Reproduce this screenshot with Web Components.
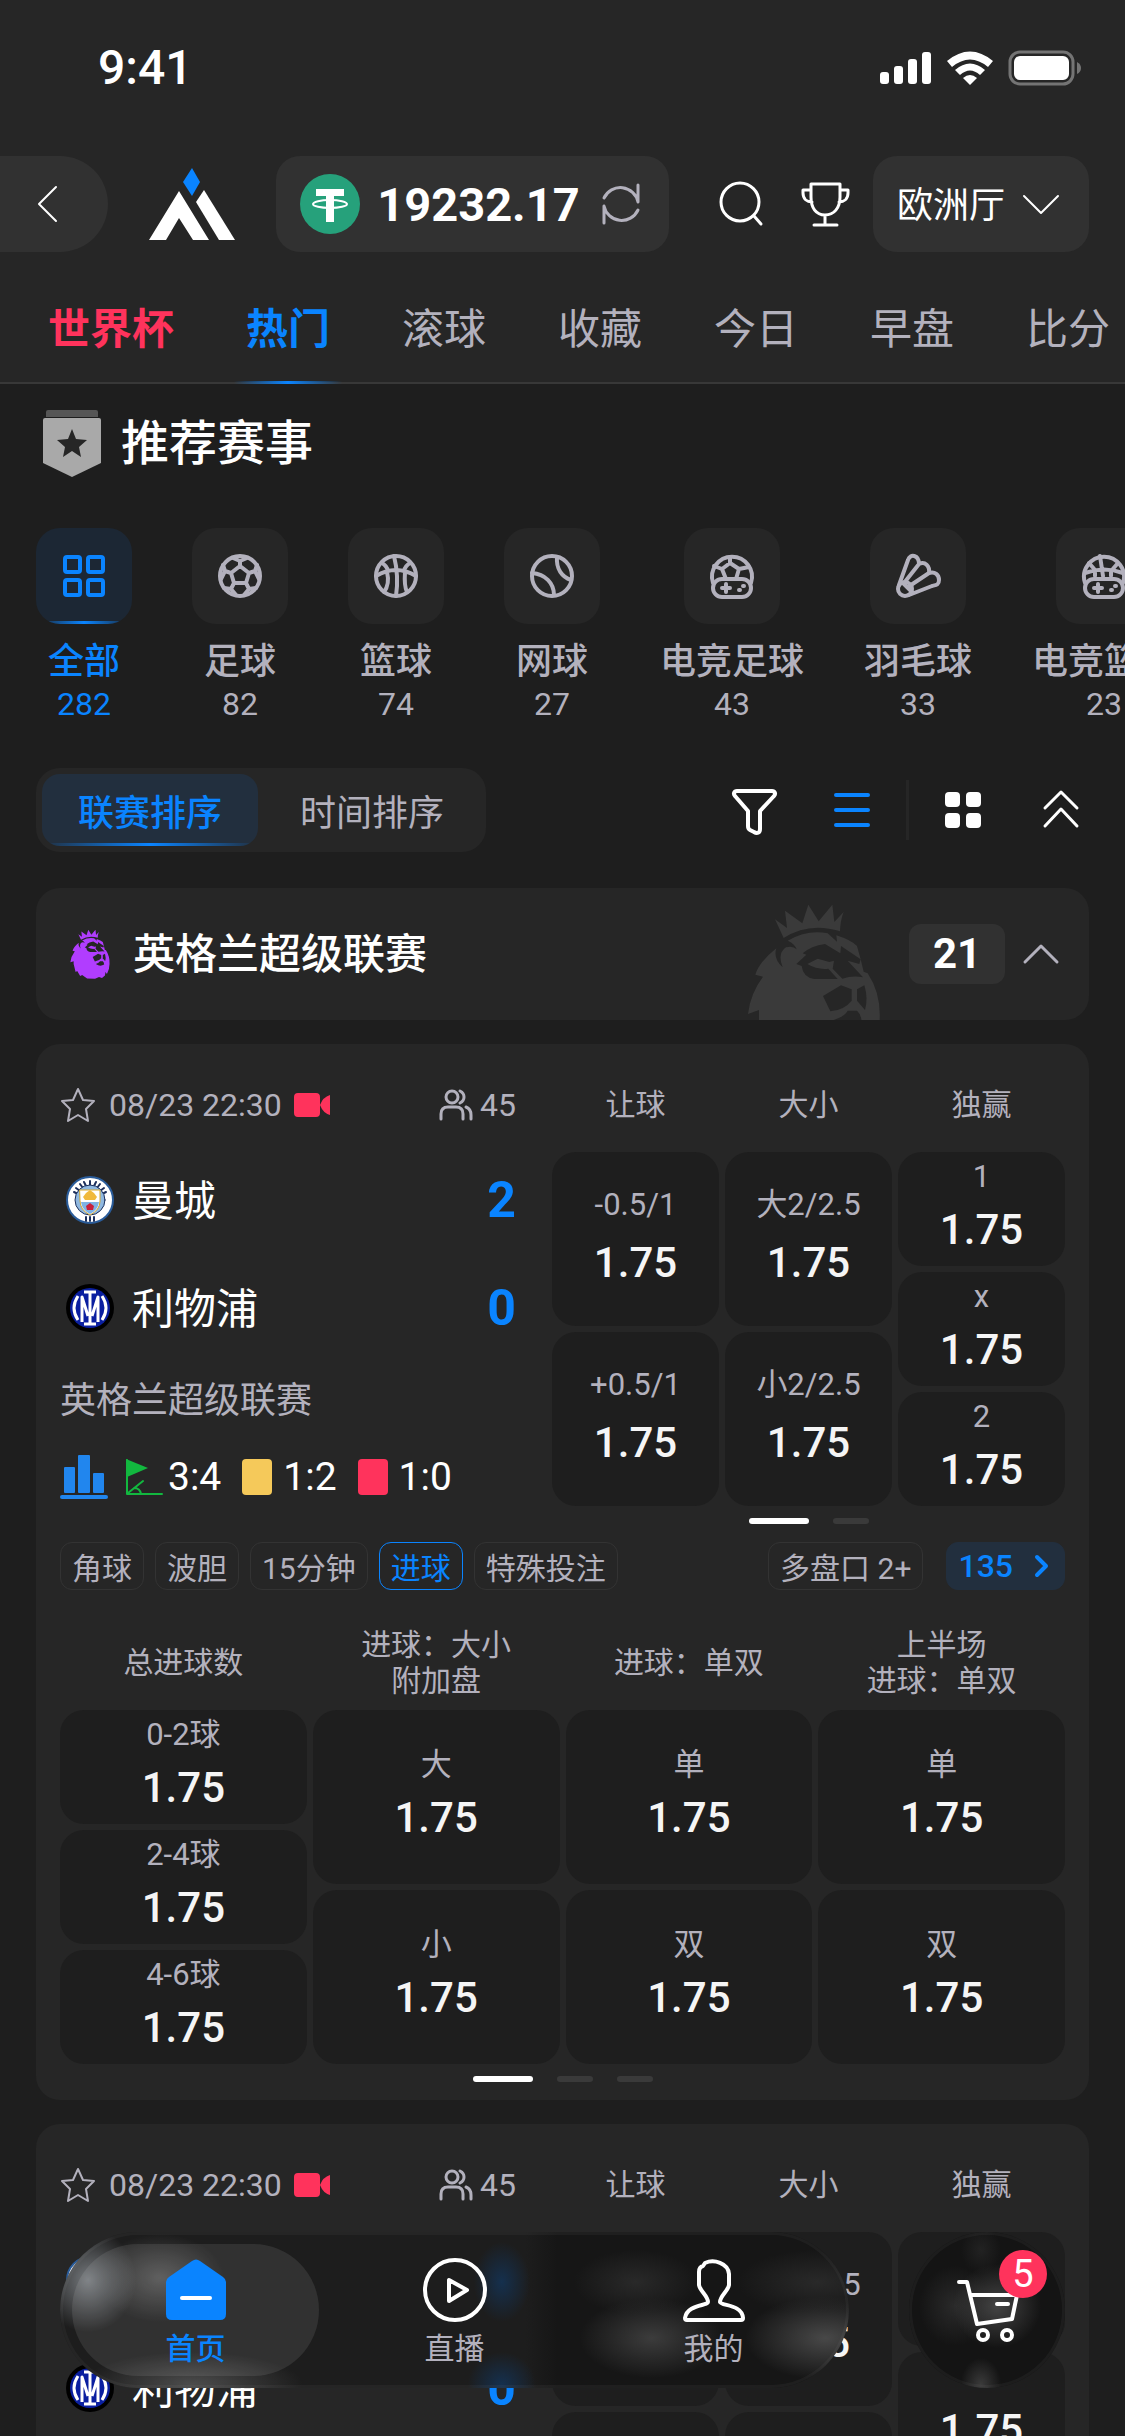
<!DOCTYPE html>
<html lang="zh-CN">
<head>
<meta charset="utf-8">
<meta name="viewport" content="width=device-width, initial-scale=1">
<title>推荐赛事</title>
<style>
    html, body {
        margin: 0;
        height: 100%;
    }
    body {
        background: #1e1e1e;
        color: #fff;
        font-family: Roboto, "Noto Sans CJK SC", sans-serif;
        --blue: #0a84ff;
        --red: #ff335c;
        --grey: #b3b1bd;
        --page: #1e1e1e;
        --card: #262626;
        --raised: #313131;
        --tint: #222f3e;
    }
</style>
</head>
<body>
<sports-app>
    <status-bar slot="header" time="9:41"></status-bar>
    <top-bar slot="header" balance="19232.17"></top-bar>
    <nav-tabs slot="header">
        <nav-tab kind="hot">世界杯</nav-tab>
        <nav-tab kind="active">热门</nav-tab>
        <nav-tab>滚球</nav-tab>
        <nav-tab>收藏</nav-tab>
        <nav-tab>今日</nav-tab>
        <nav-tab>早盘</nav-tab>
        <nav-tab>比分</nav-tab>
    </nav-tabs>

    <section-title>推荐赛事</section-title>
    <sport-list>
        <sport-item icon="all" count="282" active>全部</sport-item>
        <sport-item icon="soccer" count="82">足球</sport-item>
        <sport-item icon="basketball" count="74">篮球</sport-item>
        <sport-item icon="tennis" count="27">网球</sport-item>
        <sport-item icon="esoccer" count="43">电竞足球</sport-item>
        <sport-item icon="shuttle" count="33">羽毛球</sport-item>
        <sport-item icon="ebasketball" count="23">电竞篮球</sport-item>
    </sport-list>
    <sort-bar></sort-bar>
    <league-header count="21">英格兰超级联赛</league-header>
    <match-card></match-card>
    <match-card></match-card>

    <tab-bar slot="footer"></tab-bar>
</sports-app>

<script>
    // every icon is drawn with currentColor unless it has its own colours
    const LION = `
        <path d="M132 88L158 144Q235 95 327 124Q328 90 338 66L310 96L304 44L263 94L232 44L214 100L162 62L168 114Z"/>
        <path d="M170 152Q230 118 290 130L318 155L316 136Q360 150 378 168L389 208L398 245L410 250Q450 310 446 390Q446 440 420 490L405 470L400 505L370 530L340 520L300 538L220 535L170 500L150 510L120 460L104 470L84 390V360L51 372Q58 310 96 260L73 254Q85 215 136 175Q126 205 155 232Q138 190 165 172Q185 166 197 178Q190 160 170 152Z"/>
        <g fill="var(--card)">
            <path d="M226 194L215 190Q240 168 282 162L328 190L330 168L389 208L385 222L350 212L396 262Q365 256 334 266L305 236L309 212L295 216L260 206L229 222Q260 240 292 236L320 267H250Q216 262 212 228L196 222Z"/>
            <path d="M276 318L330 286L362 298V332Q340 360 298 364Z"/>
            <path d="M378 298L400 286Q412 325 402 360L378 332Z"/>
            <path d="M308 390Q340 380 350 362H378Q390 372 392 395Q350 420 308 390Z"/>
        </g>`;
    const PAD = '<rect x="5" y="27" width="38" height="18" rx="9"/><path d="M14 36h8M18 32v8"/><path d="M31 38h1M35 34h1"/>';

    const ICONS = {
        signal: ['0 0 52 34', '<g fill="currentColor"><rect y="21" width="9" height="12" rx="3"/><rect x="14" y="15" width="9" height="18" rx="3"/><rect x="28" y="8" width="9" height="25" rx="3"/><rect x="42" y="1" width="9" height="32" rx="3"/></g>'],
        wifi: ['0 0 46 34', '<g fill="currentColor"><path d="M0 10Q23-9 46 10L41 16Q23 1 5 16Z"/><path d="M8 19Q23 6 38 19L33 24Q23 15 13 24Z"/><path d="M16 27Q23 21 30 27L23 34Z"/></g>'],
        battery: ['0 0 74 36', '<rect x="2" y="2" width="63" height="32" rx="10" fill="none" stroke="#747474" stroke-width="3"/><rect x="6" y="6" width="55" height="24" rx="6" fill="currentColor"/><path d="M69 12q4 2 4 6t-4 6z" fill="#747474"/>'],
        back: ['0 0 48 48', '<path d="M32 7L15 24L32 41" stroke-width="2"/>'],
        logo: ['0 0 96 96', '<path d="M48 12L56 26L48 40L39 26Z" fill="#0a84ff"/><path d="M35 35L5 84H22L35 62L49 84H65Z" fill="currentColor"/><path d="M60 34L52 46L75 84H91Z" fill="currentColor"/>'],
        usdt: ['0 0 60 60', '<circle cx="30" cy="30" r="30" fill="#26a17b"/><path d="M16 15H44V22H34V48H26V22H16Z" fill="#fff"/><ellipse cx="30" cy="30" rx="17" ry="4" stroke="#fff" stroke-width="2"/>'],
        refresh: ['0 0 48 48', '<path d="M7 18A18 18 0 0 1 41 22V5M41 30A18 18 0 0 1 7 26V43" stroke-width="3"/>'],
        search: ['0 0 48 48', '<circle cx="23" cy="22" r="19" stroke-width="3"/><path d="M37 36L44 44" stroke-width="3"/>'],
        trophy: ['0 0 48 48', '<path d="M10 4H39V17C39 28 33 35 24 35S10 28 10 17ZM24 35V44M13 45H36M10 10H2V13C2 19 6 22 11 22M39 10H47V13C47 19 43 22 38 22" stroke-width="3"/>'],
        down: ['0 0 48 48', '<path d="M7 16L24 33L41 16" stroke-width="2"/>'],
        medal: ['0 0 60 68', '<path d="M4 2Q4 0 6 0H54Q56 0 56 2V7H4Z" fill="#565656"/><path d="M1 10Q1 8 3 8H57Q59 8 59 10V53L30 67L1 53Z" fill="#a9a9a9"/><path d="M30 19L34 29L45 30L37 37L39 47L30 41L21 47L23 37L15 30L26 29Z" fill="#262626"/>'],
        all: ['0 0 48 48', '<g stroke-width="4"><rect x="5" y="5" width="15" height="15" rx="2"/><rect x="28" y="5" width="15" height="15" rx="2"/><rect x="5" y="28" width="15" height="15" rx="2"/><rect x="28" y="28" width="15" height="15" rx="2"/></g>'],
        soccer: ['0 0 48 48', '<circle cx="24" cy="24" r="20"/><path d="M24 14L33 21L30 31H18L15 21ZM24 14V9M17 6L24 9L31 6M33 21L39 19M43 27L39 19L41 13M30 31L33 37M28 43L33 37L40 36M18 31L15 37M20 43L15 37L8 36M15 21L9 19M5 27L9 19L7 13"/>'],
        basketball: ['0 0 48 48', '<circle cx="24" cy="24" r="20"/><path d="M22 4Q27 24 24 44M4 24Q24 12 44 24M10 11Q15 14 16 19M38 11Q33 14 32 19M15 20Q18 32 12 40M33 20Q32 34 35 40"/>'],
        tennis: ['0 0 48 48', '<circle cx="24" cy="24" r="20"/><path d="M4 21C17 22 26 31 26 43M29 5C28 17 34 25 43 28"/>'],
        esoccer: ['0 0 48 48', '<path d="M5 31A20 20 0 1 1 43 31"/><path d="M18 27L14 17L22 11L31 17L28 27M22 11V5M14 17L6 14M31 17L41 15"/>' + PAD],
        ebasketball: ['0 0 48 48', '<path d="M5 31A20 20 0 1 1 43 31"/><path d="M5 21Q24 14 43 21M20 4L23 24M9 11L15 18M38 11L32 18M15 20V24M31 20V24"/>' + PAD],
        shuttle: ['0 0 48 48', '<circle cx="11" cy="37" r="7"/><path d="M5 33L14 8C16 1 25 3 25 12C31 9 36 14 35 21C41 19 45 23 45 28S42 33 38 34L15 43M10 31L25 12M14 35L35 21M9 31L19 41"/>'],
        filter: ['0 0 48 48', '<path d="M7 5H42C45 5 46 8 44 10L30 25V43C30 47 27 48 24 46L20 44Q18 43 18 40V25L5 10C3 8 4 5 7 5Z" stroke-width="4"/>'],
        list: ['0 0 48 48', '<g fill="currentColor"><rect x="6" y="7" width="36" height="4" rx="2"/><rect x="6" y="22" width="36" height="4" rx="2"/><rect x="6" y="37" width="36" height="4" rx="2"/></g>'],
        grid: ['0 0 48 48', '<g fill="currentColor"><rect x="6" y="6" width="15" height="15" rx="4"/><rect x="27" y="6" width="15" height="15" rx="4"/><rect x="6" y="27" width="15" height="15" rx="4"/><rect x="27" y="27" width="15" height="15" rx="4"/></g>'],
        collapse: ['0 0 48 48', '<path d="M8 22L24 6L40 22M8 40L24 23L40 40" stroke-width="3"/>'],
        up: ['0 0 48 48', '<path d="M8 32L24 16L40 32" stroke-width="3"/>'],
        lion: ['48 36 402 504', '<g fill="currentColor">' + LION + '</g>'],
        star: ['0 0 36 36', '<path d="M18 2L23 13L34 14L26 22L28 34L18 28L8 34L10 22L2 14L13 13Z" stroke-width="2"/>'],
        camera: ['0 0 36 24', '<path d="M4 0H22Q26 0 26 4V20Q26 24 22 24H4Q0 24 0 20V4Q0 0 4 0ZM36 2V22Q29 20 26 12Q29 4 36 2Z" fill="#ff335c"/>'],
        people: ['0 0 36 36', '<g stroke-width="3"><circle cx="14" cy="10" r="6"/><path d="M3 32V27Q3 20 10 20H18Q25 20 25 27V32M22 4Q26 6 26 10T22 16M28 20Q33 22 33 28V32"/></g>'],
        bars: ['0 0 48 44', '<g fill="#2186ee"><rect x="4" y="12" width="11" height="26" rx="1"/><rect x="18" y="0" width="12" height="38" rx="1"/><rect x="33" y="18" width="11" height="20" rx="1"/><rect y="40" width="48" height="4" rx="2"/></g>'],
        flag: ['0 0 36 36', '<path d="M0 0L22 9L1 18Z" fill="#12b83f"/><path d="M1 1V35H36M2 34L17 22M8 29Q14 29 15 35" stroke="#12b83f" stroke-width="2"/>'],
        more: ['0 0 24 24', '<path d="M8 3L17 12L8 21" stroke-width="4"/>'],
        home: ['0 0 64 64', '<path d="M28 3Q32 0 36 3L59 19Q62 21 62 24V56Q62 62 56 62H8Q2 62 2 56V24Q2 21 5 19Z" fill="#0a84ff"/><path d="M18 40H46" stroke="#fff" stroke-width="4"/>'],
        play: ['0 0 64 64', '<circle cx="32" cy="32" r="30" stroke-width="4"/><path d="M26 22V43L44 32Z" stroke-width="4"/>'],
        user: ['0 0 64 64', '<path d="M23 5C32 1 46 5 47 16V27C46 33 38 38 38 44C39 48 60 46 61 60Q61 62 59 62H5Q3 62 3 60C5 46 26 48 26 44C26 38 18 33 17 27V14Q17 9 21 8Z" stroke-width="4"/>'],
        cart: ['0 0 64 64', '<path d="M4 4H12L22 46L57 41L62 17H15M42 26H53" stroke-width="4"/><circle cx="28" cy="57" r="5" stroke-width="4"/><circle cx="52" cy="57" r="5" stroke-width="4"/>'],
        city: ['0 0 48 48', `
            <circle cx="24" cy="24" r="23" fill="#fff" stroke="#2a5c9a" stroke-width="2"/>
            <path d="M8 16l4 2M10 12l4 3M14 8l3 4M18 6l2 4M24 5v4M30 6l-2 4M34 8l-3 4M38 12l-4 3M40 16l-4 2M20 41v4M24 41v4M28 41v4" stroke="#1c2f5c" stroke-width="2"/>
            <circle cx="24" cy="24" r="15" fill="#8fb8e0" stroke="#1c2f5c" stroke-width="1"/>
            <path d="M14 14H34V25Q34 34 24 39Q14 34 14 25Z" fill="#fff" stroke="#d9a92f" stroke-width="1"/>
            <path d="M15 26H33Q32 34 24 38Q16 34 15 26Z" fill="#7fb2e5"/>
            <path d="M17 21L20 17L24 14L28 17L31 21L29 24H19Z" fill="#f0b93c"/>
            <path d="M24 27L28 30L27 34H21L20 30Z" fill="#c8203c"/>`],
        inter: ['0 0 48 48', `
            <circle cx="24" cy="24" r="24" fill="#000"/><circle cx="24" cy="24" r="20" fill="#0a1fa0"/>
            <g stroke="#fff" stroke-width="3" stroke-linecap="butt">
                <path d="M18 8H30M18 40H30M24 8V40M16 38V13L22 32M32 38V13L26 32"/>
                <path d="M12 12Q4 24 12 36M36 12Q44 24 36 36"/>
            </g>`]
    };

    // shared base: each element gives its own css() and html()
    class BaseElement extends HTMLElement {
        connectedCallback() {
            if (this.shadowRoot) return;
            this.attachShadow({ mode: 'open' });
            const tmpl = document.createElement('template');
            tmpl.innerHTML = `
                <style>
                * { box-sizing: border-box; }
                :host { display: block; box-sizing: border-box; }
                button { margin: 0; padding: 0; border: 0; background: none; color: inherit; font: inherit; cursor: pointer; }
                ${this.css()}
                </style>
                ${this.html()}`;
            this.shadowRoot.appendChild(tmpl.content.cloneNode(true));
        }
        css() { return ''; }
        html() { return '<slot></slot>'; }
        attr(name) { return this.getAttribute(name) || ''; }
    }

    customElements.define('ui-icon', class extends BaseElement {
        css() {
            return `
                :host { flex: none; width: 48px; height: 48px; }
                svg { display: block; width: 100%; height: 100%; overflow: visible; }
                :host([line]) svg { stroke: currentColor; stroke-width: 4px; }
                [stroke-width]:not([stroke]) { stroke: currentColor; }`;
        }
        html() {
            const [box, body] = ICONS[this.attr('name')];
            return `<svg viewBox="${box}" fill="none" stroke-linecap="round" stroke-linejoin="round" aria-hidden="true">${body}</svg>`;
        }
    });

    customElements.define('sports-app', class extends BaseElement {
        css() {
            return `
                :host { position: relative; display: flex; flex-direction: column; height: 100vh; overflow: hidden; }
                header { flex: none; background: linear-gradient(#383838, #383838) bottom / 100% 2px no-repeat var(--card); }
                main { flex: 1; min-height: 0; overflow-y: auto; overflow-x: hidden; scrollbar-width: none; padding: 0 36px; }
                footer { position: absolute; left: 60px; right: 60px; bottom: 48px; }`;
        }
        html() {
            return `
                <header><slot name="header"></slot></header>
                <main><slot></slot></main>
                <footer><slot name="footer"></slot></footer>`;
        }
    });

    customElements.define('status-bar', class extends BaseElement {
        css() {
            return `
                :host { display: flex; align-items: center; gap: 15px; padding: 44px 43px 64px 98px; }
                time { flex: 1; font-size: 48px; line-height: 48px; font-weight: 500; }
                .signal { width: 52px; height: 34px; }
                .wifi { width: 46px; height: 34px; }
                .battery { width: 74px; height: 36px; }`;
        }
        html() {
            return `
                <time>${this.attr('time')}</time>
                <ui-icon class="signal" name="signal"></ui-icon>
                <ui-icon class="wifi" name="wifi"></ui-icon>
                <ui-icon class="battery" name="battery"></ui-icon>`;
        }
    });

    customElements.define('top-bar', class extends BaseElement {
        css() {
            return `
                :host { display: flex; align-items: center; gap: 36px; height: 96px; padding-right: 36px; }
                .back { display: flex; align-items: center; padding-left: 24px; width: 108px; height: 96px; background: var(--raised); border-radius: 0 48px 48px 0; }
                .logo { width: 96px; height: 96px; }
                .balance { flex: 1; display: flex; align-items: center; height: 96px; padding: 0 24px; border-radius: 24px; background: var(--raised); }
                .balance span { flex: 1; text-align: center; font-size: 47px; font-weight: 700; }
                .coin { width: 60px; height: 60px; }
                .refresh { color: var(--grey); }
                .tools { display: flex; gap: 36px; padding-left: 12px; }
                .hall { position: relative; width: 216px; margin-left: -12px; color: #fff; }
                .hall ui-icon { position: absolute; right: 24px; top: 24px; pointer-events: none; }
                select { appearance: none; width: 100%; height: 96px; padding: 3px 24px 0; border: 0; border-radius: 24px; background: var(--raised); color: #fff; font: inherit; font-size: 36px; }`;
        }
        html() {
            return `
                <button class="back" aria-label="返回"><ui-icon name="back"></ui-icon></button>
                <ui-icon class="logo" name="logo"></ui-icon>
                <div class="balance">
                    <ui-icon class="coin" name="usdt"></ui-icon>
                    <span>${this.attr('balance')}</span>
                    <button class="refresh" aria-label="刷新"><ui-icon name="refresh"></ui-icon></button>
                </div>
                <div class="tools">
                    <button aria-label="搜索"><ui-icon name="search"></ui-icon></button>
                    <button aria-label="奖杯"><ui-icon name="trophy"></ui-icon></button>
                </div>
                <div class="hall">
                    <select aria-label="厅"><option>欧洲厅</option></select>
                    <ui-icon name="down"></ui-icon>
                </div>`;
        }
    });

    customElements.define('nav-tabs', class extends BaseElement {
        css() { return 'nav { display: flex; gap: 72px; padding-left: 48px; overflow: hidden; }'; }
        html() { return '<nav><slot></slot></nav>'; }
    });

    customElements.define('nav-tab', class extends BaseElement {
        css() {
            return `
                :host { flex: none; position: relative; color: var(--grey); font-size: 42px; }
                :host([kind]) { color: var(--blue); font-weight: 700; }
                :host([kind="hot"]) { color: var(--red); }
                :host([kind="active"])::after { content: ""; position: absolute; left: -12px; right: -12px; bottom: 0; height: 3px; background: linear-gradient(90deg, transparent, var(--blue), transparent); }
                a { display: block; padding: 54px 0 30px; line-height: 48px; color: inherit; text-decoration: none; }`;
        }
        html() { return '<a href="#"><slot></slot></a>'; }
    });

    customElements.define('section-title', class extends BaseElement {
        css() {
            return `
                :host { display: flex; align-items: center; gap: 19px; height: 120px; padding-left: 6px; }
                ui-icon { width: 60px; height: 68px; }
                h1 { margin: 0; font-size: 48px; font-weight: 500; line-height: 60px; }`;
        }
        html() { return '<ui-icon name="medal"></ui-icon><h1><slot></slot></h1>'; }
    });

    customElements.define('sport-list', class extends BaseElement {
        css() { return ':host { display: flex; gap: 60px; margin: 24px -36px 46px 0; overflow: hidden; }'; }
    });

    customElements.define('sport-item', class extends BaseElement {
        css() {
            return `
                :host { flex: none; color: var(--grey); }
                :host([active]) { color: var(--blue); }
                button { display: flex; flex-direction: column; align-items: center; }
                .box { display: grid; place-items: center; width: 96px; height: 96px; margin-bottom: 14px; border-radius: 24px; background: var(--card); }
                :host([active]) .box { background: linear-gradient(90deg, transparent, var(--blue), transparent) bottom / 100% 3px no-repeat #1c2734; }
                .name { font-size: 36px; line-height: 48px; font-weight: 500; white-space: nowrap; }
                .count { font-size: 32px; line-height: 36px; }`;
        }
        html() {
            return `
                <button>
                    <span class="box"><ui-icon line name="${this.attr('icon')}"></ui-icon></span>
                    <span class="name"><slot></slot></span>
                    <span class="count">${this.attr('count')}</span>
                </button>`;
        }
    });

    customElements.define('sort-bar', class extends BaseElement {
        css() {
            return `
                :host { display: flex; justify-content: space-between; align-items: center; margin-bottom: 36px; }
                .sort { display: flex; gap: 6px; padding: 6px; border-radius: 24px; background: var(--card); }
                .sort button { width: 216px; height: 72px; border-radius: 18px; color: var(--grey); font-size: 36px; }
                .sort .on { color: var(--blue); font-weight: 500; background: linear-gradient(90deg, transparent, var(--blue), transparent) bottom / 100% 3px no-repeat var(--tint); }
                .tools { display: flex; align-items: center; gap: 50px; padding-right: 4px; }
                .view { display: flex; align-items: center; gap: 30px; }
                .view i { width: 3px; height: 60px; background: var(--card); }
                .blue { color: var(--blue); }`;
        }
        html() {
            return `
                <div class="sort">
                    <button class="on">联赛排序</button>
                    <button>时间排序</button>
                </div>
                <div class="tools">
                    <button aria-label="筛选"><ui-icon name="filter"></ui-icon></button>
                    <div class="view">
                        <button class="blue" aria-label="列表"><ui-icon name="list"></ui-icon></button>
                        <i></i>
                        <button aria-label="宫格"><ui-icon name="grid"></ui-icon></button>
                    </div>
                    <button aria-label="收起"><ui-icon name="collapse"></ui-icon></button>
                </div>`;
        }
    });

    customElements.define('league-header', class extends BaseElement {
        css() {
            return `
                :host { position: relative; display: flex; align-items: center; height: 132px; padding: 0 24px 0 34px; border-radius: 24px; background: var(--card); overflow: hidden; }
                .lion { width: 40px; height: 50px; color: #b13dff; }
                h2 { flex: 1; margin: 0 0 0 23px; padding-bottom: 8px; font-size: 42px; font-weight: 500; }
                .mark { position: absolute; right: 208px; top: 14px; width: 134px; height: 168px; color: #3a3a3a; }
                .count { width: 96px; line-height: 60px; margin-right: 12px; border-radius: 12px; background: var(--raised); text-align: center; font-size: 42px; font-weight: 700; }
                button { color: var(--grey); }`;
        }
        html() {
            return `
                <ui-icon class="mark" name="lion"></ui-icon>
                <ui-icon class="lion" name="lion"></ui-icon>
                <h2><slot></slot></h2>
                <span class="count">${this.attr('count')}</span>
                <button aria-label="折叠"><ui-icon name="up"></ui-icon></button>`;
        }
    });

    customElements.define('page-dots', class extends BaseElement {
        css() {
            return `
                :host { display: flex; justify-content: center; gap: 24px; }
                i { width: 36px; height: 6px; border-radius: 3px; background: #3a3a3a; }
                i:first-of-type { width: 60px; background: #fff; }`;
        }
        html() { return '<i></i>'.repeat(Number(this.attr('count'))); }
    });

    // one button with a handicap and its odds
    customElements.define('odds-cell', class extends BaseElement {
        css() {
            return `
                :host { flex: 1; display: flex; }
                button { flex: 1; display: flex; flex-direction: column; justify-content: center; align-items: center; padding-bottom: 7px; border-radius: 24px; background: var(--page); }
                :host([loose]) button { gap: 5px; }
                .label { font-size: 31px; line-height: 48px; color: var(--grey); }
                b { font-size: 42px; line-height: 57px; font-weight: 500; color: #f5f5f5; }`;
        }
        html() {
            return `<button><span class="label">${this.attr('label')}</span><b>${this.attr('odds')}</b></button>`;
        }
    });

    customElements.define('odds-column', class extends BaseElement {
        css() {
            return `
                :host { flex: 1 1 0; min-width: 0; display: flex; flex-direction: column; }
                .head { display: flex; flex-direction: column; justify-content: center; align-items: center; height: var(--head, 72px); padding-top: var(--drop, 1px); margin-bottom: var(--after, 12px); font-size: 30px; line-height: 36px; color: var(--grey); text-align: center; white-space: pre-line; }
                .cells { display: flex; flex-direction: column; gap: 6px; height: 354px; }`;
        }
        html() {
            return `<div class="head">${this.attr('head')}</div><div class="cells"><slot></slot></div>`;
        }
    });

    customElements.define('team-row', class extends BaseElement {
        css() {
            return `
                :host { display: flex; align-items: center; gap: 18px; height: 96px; padding-left: 6px; font-size: 42px; }
                .name { flex: 1; padding-bottom: 6px; }
                b { font-size: 50px; color: var(--blue); }`;
        }
        html() {
            return `
                <ui-icon name="${this.attr('crest')}"></ui-icon>
                <span class="name"><slot></slot></span>
                <b>${this.attr('score')}</b>`;
        }
    });

    customElements.define('bet-chip', class extends BaseElement {
        css() {
            return `
                :host { flex: none; }
                button { display: flex; align-items: center; height: 48px; padding: 0 11px; border: 1px solid #333; border-radius: 12px; color: var(--grey); font-size: 30px; white-space: nowrap; }
                :host([active]) button { border-color: var(--blue); color: var(--blue); }
                :host([fill]) button { gap: 12px; border-color: var(--tint); background: var(--tint); color: var(--blue); font-weight: 500; font-size: 32px; }`;
        }
        html() { return '<button><slot></slot></button>'; }
    });

    customElements.define('match-card', class extends BaseElement {
        css() {
            return `
                :host { margin-top: 24px; padding: 0 24px 18px; border-radius: 24px; background: var(--card); }
                .top { display: flex; gap: 36px; }
                .info { flex: 456 1 0; min-width: 0; }
                .markets { flex: 513 1 0; min-width: 0; --head: 108px; --drop: 14px; --after: 0px; }
                .row { display: flex; gap: 6px; }
                .meta { display: flex; align-items: center; height: 108px; padding-top: 14px; font-size: 32px; color: var(--grey); }
                .meta ui-icon { width: 36px; height: 36px; }
                .meta time { margin: 0 12px 0 13px; }
                .meta .camera { height: 24px; }
                .meta .fans { display: flex; align-items: center; gap: 6px; margin-left: auto; }
                team-row + team-row { margin-top: 12px; }
                .league { margin: 21px 0 28px; font-size: 36px; line-height: 48px; color: var(--grey); }
                .stats { display: flex; align-items: center; height: 48px; font-size: 39px; }
                .stats .bars { height: 44px; margin-right: 18px; }
                .stats .flag { width: 36px; height: 36px; margin-right: 6px; }
                .stats i { width: 30px; height: 36px; margin: 0 11px 0 21px; border-radius: 4px; background: #f5c95a; }
                .stats i.red { background: var(--red); }
                page-dots { margin-top: 12px; }
                .chips { display: flex; gap: 11px; margin: 18px 0 36px; }
                .chips .multi { margin-left: auto; margin-right: 12px; }
                .chips ui-icon { width: 24px; height: 24px; margin-left: 4px; }`;
        }
        html() {
            return `
                <div class="top">
                    <div class="info">
                        <div class="meta">
                            <ui-icon name="star"></ui-icon>
                            <time>08/23 22:30</time>
                            <ui-icon class="camera" name="camera"></ui-icon>
                            <span class="fans"><ui-icon name="people"></ui-icon>45</span>
                        </div>
                        <team-row crest="city" score="2">曼城</team-row>
                        <team-row crest="inter" score="0">利物浦</team-row>
                        <div class="league">英格兰超级联赛</div>
                        <div class="stats">
                            <ui-icon class="bars" name="bars"></ui-icon>
                            <ui-icon class="flag" name="flag"></ui-icon>3:4
                            <i></i>1:2
                            <i class="red"></i>1:0
                        </div>
                    </div>
                    <div class="markets">
                        <div class="row">
                            <odds-column head="让球">
                                <odds-cell loose label="-0.5/1" odds="1.75"></odds-cell>
                                <odds-cell loose label="+0.5/1" odds="1.75"></odds-cell>
                            </odds-column>
                            <odds-column head="大小">
                                <odds-cell loose label="大2/2.5" odds="1.75"></odds-cell>
                                <odds-cell loose label="小2/2.5" odds="1.75"></odds-cell>
                            </odds-column>
                            <odds-column head="独赢">
                                <odds-cell label="1" odds="1.75"></odds-cell>
                                <odds-cell label="x" odds="1.75"></odds-cell>
                                <odds-cell label="2" odds="1.75"></odds-cell>
                            </odds-column>
                        </div>
                        <page-dots count="2"></page-dots>
                    </div>
                </div>
                <div class="chips">
                    <bet-chip>角球</bet-chip>
                    <bet-chip>波胆</bet-chip>
                    <bet-chip>15分钟</bet-chip>
                    <bet-chip active>进球</bet-chip>
                    <bet-chip>特殊投注</bet-chip>
                    <bet-chip class="multi">多盘口 2+</bet-chip>
                    <bet-chip fill>135<ui-icon name="more"></ui-icon></bet-chip>
                </div>
                <div class="row">
                    <odds-column head="总进球数">
                        <odds-cell label="0-2球" odds="1.75"></odds-cell>
                        <odds-cell label="2-4球" odds="1.75"></odds-cell>
                        <odds-cell label="4-6球" odds="1.75"></odds-cell>
                    </odds-column>
                    <odds-column head="进球：大小&#10;附加盘">
                        <odds-cell label="大" odds="1.75"></odds-cell>
                        <odds-cell label="小" odds="1.75"></odds-cell>
                    </odds-column>
                    <odds-column head="进球：单双">
                        <odds-cell label="单" odds="1.75"></odds-cell>
                        <odds-cell label="双" odds="1.75"></odds-cell>
                    </odds-column>
                    <odds-column head="上半场&#10;进球：单双">
                        <odds-cell label="单" odds="1.75"></odds-cell>
                        <odds-cell label="双" odds="1.75"></odds-cell>
                    </odds-column>
                </div>
                <page-dots count="3"></page-dots>`;
        }
    });

    // floating bar with the cart beside it; the glows give it the look of dark glass
    customElements.define('tab-bar', class extends BaseElement {
        css() {
            return `
                :host { display: flex; gap: 60px; }
                .glass { position: relative; height: 156px; border-radius: 78px; box-shadow: inset 0 0 0 3px rgba(255, 255, 255, 0.04); }
                nav {
                    flex: 1; display: flex; gap: 12px; padding: 12px;
                    background:
                        radial-gradient(48px 52px at 28px 48px, #74787c, transparent),
                        radial-gradient(64px 44px at 100px 46px, #505050, transparent),
                        radial-gradient(110px 32px at 132px 152px, #4c4c4c, transparent),
                        radial-gradient(28px 40px at 56% 50px, #15304e, transparent),
                        radial-gradient(34px 32px at 56% 152px, #15304e, transparent),
                        radial-gradient(62px 32px at 73% 50px, #292929, transparent),
                        radial-gradient(72px 40px at 75% 106px, #3c3c3c, transparent),
                        radial-gradient(80px 32px at 96% 50px, #292929, transparent),
                        radial-gradient(80px 42px at 97% 106px, #484848, transparent),
                        linear-gradient(90deg, #1d1d1d 59%, #161616 63%);
                }
                a { flex: 1; display: flex; flex-direction: column; align-items: center; justify-content: center; gap: 6px; height: 132px; padding-top: 8px; border-radius: 66px; color: #fff; text-decoration: none; font-size: 30px; line-height: 42px; }
                a span { color: var(--grey); }
                a.on { background: rgba(255, 255, 255, 0.09); }
                a.on span { color: var(--blue); font-weight: 500; }
                ui-icon { width: 64px; height: 64px; }
                .cart {
                    flex: none; display: grid; place-items: center; width: 156px;
                    background:
                        radial-gradient(44px 42px at 88px 74px, #444, transparent),
                        radial-gradient(36px 40px at 46px 74px, #2a2a2a, transparent),
                        radial-gradient(20px 26px at 72px 152px, #3a3a3a, transparent),
                        radial-gradient(20px 24px at 72px 18px, #222, transparent),
                        #141414;
                }
                .badge { position: absolute; top: 18px; right: 18px; width: 48px; border-radius: 24px; background: var(--red); font-size: 38px; line-height: 48px; text-align: center; }`;
        }
        html() {
            return `
                <nav class="glass">
                    <a class="on" href="#"><ui-icon name="home"></ui-icon><span>首页</span></a>
                    <a href="#"><ui-icon name="play"></ui-icon><span>直播</span></a>
                    <a href="#"><ui-icon name="user"></ui-icon><span>我的</span></a>
                </nav>
                <button class="cart glass" aria-label="购物车"><ui-icon name="cart"></ui-icon><span class="badge">5</span></button>`;
        }
    });
</script>
</body>
</html>
